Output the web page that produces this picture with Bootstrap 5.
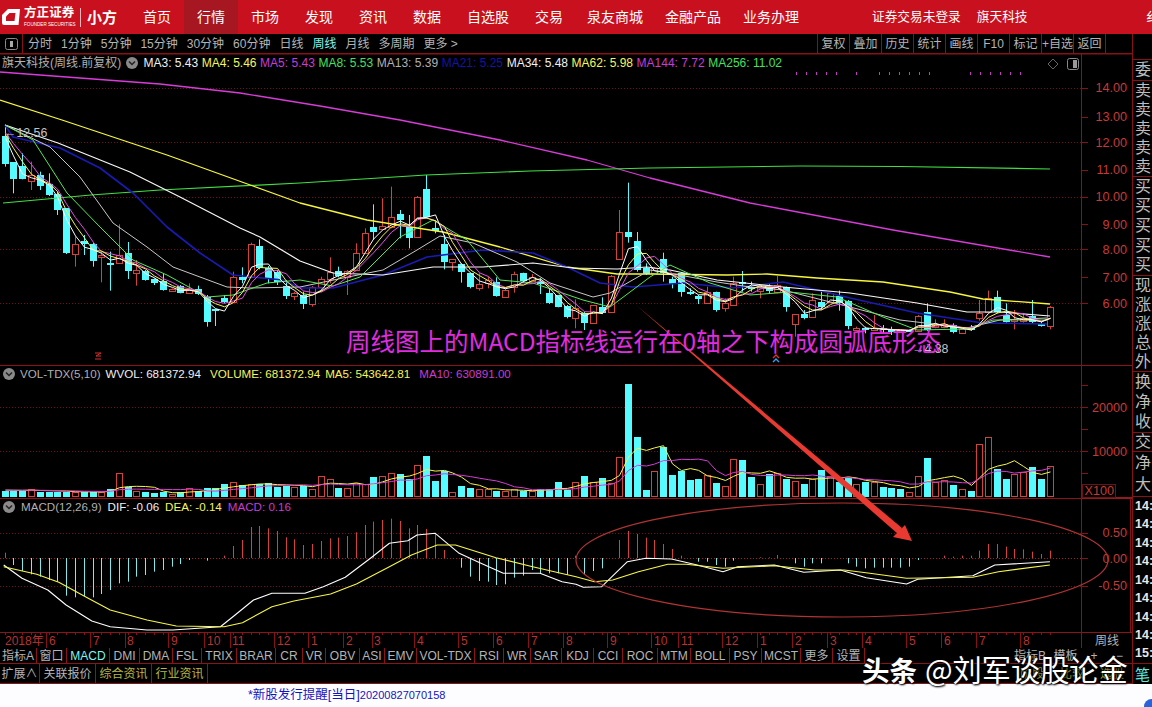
<!DOCTYPE html>
<html lang="zh">
<head>
<meta charset="utf-8">
<title>旗天科技 周线</title>
<link href="https://cdn.jsdelivr.net/npm/bootstrap@5.3.0/dist/css/bootstrap.min.css" rel="stylesheet">
<style>
html,body{margin:0;height:100%;overflow:hidden;background:#000}
body{font-family:"Liberation Sans","Noto Sans CJK SC",sans-serif;font-size:12px;color:#b4b4b4;line-height:1}
.app{width:1152px;height:707px}
.topbar{height:34px;background:#c8101e;color:#fff;padding:0}
.logo{width:130px;padding-left:2px}
.logo-txt{width:53px}
.logo-cn{font-size:12.5px;font-weight:700;line-height:13px;letter-spacing:.1px}
.logo-en{font-size:4.6px;line-height:6px;margin-top:2px;white-space:nowrap}
.logo-bar{width:1px;height:19px;background:#f4b8bc;margin:0 6px 0 3px}
.logo-min{font-size:15px;font-weight:700}
.navbar-expand .navbar-nav .nav-link.topl{color:#fff;font-size:14px;line-height:34px;padding:0 13px;height:34px}
.navbar-expand .navbar-nav .nav-link.topl.wide4{padding:0 11px}
.navbar-expand .navbar-nav .nav-link.topl.on{background:#a61722}
.top-right{font-size:12.7px;margin-left:62px;gap:16px}
.top-clip{position:absolute;left:1146px;top:10px;font-size:13px}
.leftcol{width:1132px}
.toolbar{height:20px;border-bottom:1px solid #861217}
.tb-ico{width:23px;height:19px;border-right:1px solid #861217}
.tb-list{gap:9px;padding-left:5px}
.tb-cy{color:#7ff5ee}
.tb-btn{width:32px;height:19px;border-left:1px solid #861217;color:#b4b4b4}
.tb-right{margin-right:26px;border-right:1px solid #861217}
.chartwrap{height:594px}
.canvas-svg{left:0;top:0}
.pane1{height:311px}.pane2{height:133px}.pane3{height:134px}
.pane-head{height:18px;gap:5px;padding-left:3px;font-size:11.6px;white-space:nowrap}
.pane3 .pane-head{gap:6px}
.pane1 .pane-head{font-size:12px;padding-left:2px;gap:3.6px}
.head-mark{margin:0 1.5px}
.c-w{color:#f0f0f0}.c-g{color:#b0b0b0}.c-y{color:#f6f65a}.c-m{color:#c93bd6}.c-l{color:#46e05c}.c-b{color:#1414a8}
.tabs1{height:16px;border-bottom:1px solid #8c1318}
.tabs2{height:20px;border-bottom:1px solid #8c1318}
.tab-grid1{display:grid;grid-template-columns:37px 30px 43px 30px 33px 29px 35px 39px 27px 23px 34px 25px 32px 58px 29px 27px 31px 32px 29px 35px 33px 39px 32px 39px 32px 32px}
.tab-grid2{display:grid;grid-template-columns:40px 56px 56px 56px}
.tabc{border-right:1px solid #8c1318;white-space:nowrap;height:100%}
.tab-yel{color:#b9b645}
.tr-a{width:40px}.tr-b{width:31px}.tr-c{width:26px}
.tr-d{width:25px}
.tabs2 .faint{color:#8e9030;gap:16px;margin-right:8px}
.sidecol{width:20px;border-left:1px solid #861217;display:grid;grid-template-rows:26px 21px 96px 99px 96px 61px 19px 45px 167px 20px;background:#000}
.sgrp{border-bottom:1px solid #861217;overflow:hidden;font-size:16px;padding-left:2px;color:#bdbdbd;white-space:nowrap}
.sgrp-t{font-size:12.5px;font-weight:700;color:#e8e8e8}
.sgrp-c{color:#5fe9e4;font-size:15px;border-bottom:0}
.whitebar{height:23px;background:#fdfdff;color:#1414c0;padding-left:248px;font-size:12.5px}
.whitebar small{font-size:11px}
.dot-blue{position:absolute;right:-7px;bottom:-7px;width:15px;height:15px;border-radius:50%;background:#2a62d8}
.wm{left:862px;top:651px;color:#fff;font-size:29.2px;line-height:34px;white-space:nowrap;text-shadow:0 0 2px #000,1px 1px 2px #000;font-family:"Noto Sans CJK SC",sans-serif}
.wm b{font-weight:700;margin-right:8px;font-size:27.5px}
svg text{font-family:"Liberation Sans","Noto Sans CJK SC",sans-serif}
.ax{fill:#c63a36;font-size:12.6px;text-anchor:end}
.dt{fill:#b83232;font-size:12px}
.big{fill:#e02ce0;font-size:24.5px;font-family:"Noto Sans CJK SC",sans-serif}
.mini{fill:#c4c4c4;font-size:12.4px}
.big2{fill:#b4b4b4;font-size:12px}
</style>
</head>
<body>
<div class="app position-relative d-flex flex-column overflow-hidden">

<nav class="topbar navbar navbar-expand flex-nowrap justify-content-start">
  <div class="logo d-flex align-items-center">
    <svg width="18" height="16" viewBox="0 0 18 16"><path fill="#fff" d="M6 0H18L16.5 16H2Q0 16 0 14V6Z"/><path fill="#c8101e" d="M7.5 4H13.5L12.5 12H4V7.5Z"/></svg>
    <div class="logo-txt ms-1"><div class="logo-cn">方正证券</div><div class="logo-en">FOUNDER SECURITIES</div></div>
    <span class="logo-bar"></span><span class="logo-min">小方</span>
  </div>
  <ul class="navbar-nav">
    <li class="nav-item"><a class="nav-link topl" href="#">首页</a></li>
    <li class="nav-item"><a class="nav-link topl on" href="#">行情</a></li>
    <li class="nav-item"><a class="nav-link topl" href="#">市场</a></li>
    <li class="nav-item"><a class="nav-link topl" href="#">发现</a></li>
    <li class="nav-item"><a class="nav-link topl" href="#">资讯</a></li>
    <li class="nav-item"><a class="nav-link topl" href="#">数据</a></li>
    <li class="nav-item"><a class="nav-link topl" href="#">自选股</a></li>
    <li class="nav-item"><a class="nav-link topl" href="#">交易</a></li>
    <li class="nav-item"><a class="nav-link topl wide4" href="#">泉友商城</a></li>
    <li class="nav-item"><a class="nav-link topl wide4" href="#">金融产品</a></li>
    <li class="nav-item"><a class="nav-link topl wide4" href="#">业务办理</a></li>
  </ul>
  <div class="top-right d-flex"><span>证券交易未登录</span><span>旗天科技</span></div>
  <span class="top-clip">纟</span>
</nav>

<div class="d-flex">
  <div class="leftcol d-flex flex-column">
    <div class="toolbar d-flex align-items-center">
      <div class="tb-ico d-flex align-items-center justify-content-center">
        <svg width="13" height="12" viewBox="0 0 13 12"><rect x=".5" y=".5" width="12" height="11" rx="2" fill="none" stroke="#8a8a8a"/><rect x="5" y="3" width="3" height="6" fill="#aaa"/></svg>
      </div>
      <div class="tb-list d-flex align-items-center">
        <span>分时</span><span>1分钟</span><span>5分钟</span><span>15分钟</span><span>30分钟</span><span>60分钟</span><span>日线</span><span class="tb-cy">周线</span><span>月线</span><span>多周期</span><span>更多 &gt;</span>
      </div>
      <div class="tb-right ms-auto d-flex">
        <span class="tb-btn d-flex align-items-center justify-content-center">复权</span>
        <span class="tb-btn d-flex align-items-center justify-content-center">叠加</span>
        <span class="tb-btn d-flex align-items-center justify-content-center">历史</span>
        <span class="tb-btn d-flex align-items-center justify-content-center">统计</span>
        <span class="tb-btn d-flex align-items-center justify-content-center">画线</span>
        <span class="tb-btn d-flex align-items-center justify-content-center">F10</span>
        <span class="tb-btn d-flex align-items-center justify-content-center">标记</span>
        <span class="tb-btn d-flex align-items-center justify-content-center">+自选</span>
        <span class="tb-btn d-flex align-items-center justify-content-center">返回</span>
      </div>
    </div>

    <div class="chartwrap position-relative">
      <svg class="canvas-svg position-absolute" width="1132" height="594" viewBox="0 54 1132 594">
        <g id="draw"></g>
        <text class="ax" x="1127" y="92">14.00</text><text class="ax" x="1127" y="121">13.00</text><text class="ax" x="1127" y="147">12.00</text><text class="ax" x="1127" y="174">11.00</text><text class="ax" x="1127" y="201">10.00</text><text class="ax" x="1127" y="229">9.00</text><text class="ax" x="1127" y="254">8.00</text><text class="ax" x="1127" y="282">7.00</text><text class="ax" x="1127" y="308">6.00</text>
        <text class="ax" x="1127" y="412">20000</text><text class="ax" x="1127" y="456">10000</text>
        <text class="ax" x="1114" y="495">X100</text>
        <text class="ax" x="1127" y="537">0.50</text><text class="ax" x="1127" y="563">0.00</text><text class="ax" x="1127" y="590">-0.50</text>
        <text class="dt" x="5" y="645">2018年</text><text class="dt" x="49" y="645">6</text><text class="dt" x="93" y="645">7</text><text class="dt" x="127" y="645">8</text><text class="dt" x="171" y="645">9</text><text class="dt" x="207" y="645">10</text><text class="dt" x="232" y="645">11</text><text class="dt" x="277" y="645">12</text><text class="dt" x="311" y="645">1</text><text class="dt" x="346" y="645">2</text><text class="dt" x="374" y="645">3</text><text class="dt" x="417" y="645">4</text><text class="dt" x="461" y="645">5</text><text class="dt" x="496" y="645">6</text><text class="dt" x="531" y="645">7</text><text class="dt" x="566" y="645">8</text><text class="dt" x="610" y="645">9</text><text class="dt" x="654" y="645">10</text><text class="dt" x="681" y="645">11</text><text class="dt" x="725" y="645">12</text><text class="dt" x="760" y="645">1</text><text class="dt" x="795" y="645">2</text><text class="dt" x="830" y="645">3</text><text class="dt" x="865" y="645">4</text><text class="dt" x="909" y="645">5</text><text class="dt" x="944" y="645">6</text><text class="dt" x="979" y="645">7</text><text class="dt" x="1023" y="645">8</text>
        <text class="big2" x="1095" y="645">周线</text>
        <text class="mini" x="4" y="137">←12.56</text>
        <text class="mini" x="912" y="353">→4.38</text>
        <g id="over"></g>
        <text class="big" x="346" y="351">周线图上的MACD指标线运行在0轴之下构成圆弧底形态</text>
      </svg>

      <div class="pane1 position-relative">
        <div class="pane-head d-flex align-items-center">
          <span class="c-g">旗天科技(周线.前复权)</span>
          <svg class="head-mark" width="12" height="12" viewBox="0 0 12 12"><circle cx="6" cy="6" r="6" fill="#8a8a8a"/><path d="M3 4.5L6 7.5L9 4.5" fill="none" stroke="#222" stroke-width="1.5"/></svg>
          <span class="c-w">MA3: 5.43</span><span class="c-y">MA4: 5.46</span><span class="c-m">MA5: 5.43</span><span class="c-l">MA8: 5.53</span><span class="c-g">MA13: 5.39</span><span class="c-b">MA21: 5.25</span><span class="c-w">MA34: 5.48</span><span class="c-y">MA62: 5.98</span><span class="c-m">MA144: 7.72</span><span class="c-l">MA256: 11.02</span>
        </div>
        <svg class="position-absolute" style="left:1047px;top:4px" width="33" height="13" viewBox="0 0 33 13"><path d="M6 1L11 6L6 11L1 6Z" fill="none" stroke="#666"/><rect x="20.5" y=".5" width="11" height="11" rx="2" fill="none" stroke="#8a8a8a"/><rect x="26" y="2" width="4" height="8" fill="#999"/></svg>
      </div>
      <div class="pane2">
        <div class="pane-head d-flex align-items-center">
          <svg width="12" height="12" viewBox="0 0 12 12"><circle cx="6" cy="6" r="6" fill="#8a8a8a"/><path d="M3 4.5L6 7.5L9 4.5" fill="none" stroke="#222" stroke-width="1.5"/></svg>
          <span class="c-g">VOL-TDX(5,10)</span><span class="c-w">WVOL: 681372.94</span><span class="c-y ms-1">VOLUME: 681372.94</span><span class="c-y">MA5: 543642.81</span><span class="c-m ms-1">MA10: 630891.00</span>
        </div>
      </div>
      <div class="pane3">
        <div class="pane-head d-flex align-items-center">
          <svg width="12" height="12" viewBox="0 0 12 12"><circle cx="6" cy="6" r="6" fill="#8a8a8a"/><path d="M3 4.5L6 7.5L9 4.5" fill="none" stroke="#222" stroke-width="1.5"/></svg>
          <span class="c-g">MACD(12,26,9)</span><span class="c-w">DIF: -0.06</span><span class="c-y">DEA: -0.14</span><span class="c-m">MACD: 0.16</span>
        </div>
      </div>
    </div>

    <div class="tabs1 d-flex">
      <div class="tab-grid1">
        <span class="tabc d-flex align-items-center justify-content-center">指标A</span><span class="tabc d-flex align-items-center justify-content-center">窗口</span><span class="tabc d-flex align-items-center justify-content-center tb-cy">MACD</span><span class="tabc d-flex align-items-center justify-content-center">DMI</span><span class="tabc d-flex align-items-center justify-content-center">DMA</span><span class="tabc d-flex align-items-center justify-content-center">FSL</span><span class="tabc d-flex align-items-center justify-content-center">TRIX</span><span class="tabc d-flex align-items-center justify-content-center">BRAR</span><span class="tabc d-flex align-items-center justify-content-center">CR</span><span class="tabc d-flex align-items-center justify-content-center">VR</span><span class="tabc d-flex align-items-center justify-content-center">OBV</span><span class="tabc d-flex align-items-center justify-content-center">ASI</span><span class="tabc d-flex align-items-center justify-content-center">EMV</span><span class="tabc d-flex align-items-center justify-content-center">VOL-TDX</span><span class="tabc d-flex align-items-center justify-content-center">RSI</span><span class="tabc d-flex align-items-center justify-content-center">WR</span><span class="tabc d-flex align-items-center justify-content-center">SAR</span><span class="tabc d-flex align-items-center justify-content-center">KDJ</span><span class="tabc d-flex align-items-center justify-content-center">CCI</span><span class="tabc d-flex align-items-center justify-content-center">ROC</span><span class="tabc d-flex align-items-center justify-content-center">MTM</span><span class="tabc d-flex align-items-center justify-content-center">BOLL</span><span class="tabc d-flex align-items-center justify-content-center">PSY</span><span class="tabc d-flex align-items-center justify-content-center">MCST</span><span class="tabc d-flex align-items-center justify-content-center">更多</span><span class="tabc d-flex align-items-center justify-content-center">设置</span>
      </div>
      <div class="ms-auto d-flex align-items-center text-center">
        <span class="tr-a">指标B</span><span class="tr-b">模板</span><span class="tr-c">+</span><span class="tr-d">−</span>
      </div>
    </div>
    <div class="tabs2 d-flex">
      <div class="tab-grid2">
        <span class="tabc d-flex align-items-center justify-content-center">扩展∧</span><span class="tabc d-flex align-items-center justify-content-center">关联报价</span><span class="tabc tab-yel d-flex align-items-center justify-content-center">综合资讯</span><span class="tabc tab-yel d-flex align-items-center justify-content-center">行业资讯</span>
      </div>
      <div class="faint ms-auto d-flex align-items-center"><span>阶段</span><span>比较</span><span>选股</span></div>
    </div>
  </div>

  <aside class="sidecol">
    <div class="sgrp"></div>
    <div class="sgrp d-flex align-items-center">委</div>
    <div class="sgrp d-flex flex-column justify-content-around"><span>卖</span><span>卖</span><span>卖</span><span>卖</span><span>卖</span></div>
    <div class="sgrp d-flex flex-column justify-content-around"><span>买</span><span>买</span><span>买</span><span>买</span><span>买</span></div>
    <div class="sgrp d-flex flex-column justify-content-around"><span>现</span><span>涨</span><span>涨</span><span>总</span><span>外</span></div>
    <div class="sgrp d-flex flex-column justify-content-around"><span>换</span><span>净</span><span>收</span></div>
    <div class="sgrp d-flex align-items-center">交</div>
    <div class="sgrp d-flex flex-column justify-content-around"><span>净</span><span>大</span></div>
    <div class="sgrp sgrp-t d-flex flex-column justify-content-around"><span>14:</span><span>14:</span><span>14:</span><span>14:</span><span>14:</span><span>14:</span><span>14:</span><span>14:</span><span>15:</span></div>
    <div class="sgrp sgrp-c d-flex align-items-center">笔</div>
  </aside>
</div>

<div class="whitebar position-relative d-flex align-items-center flex-grow-1 overflow-hidden">
  <span>*新股发行提醒[当日]<small>20200827070158</small></span>
  <span class="dot-blue"></span>
</div>

<div class="wm position-absolute"><b>头条</b>@刘军谈股论金</div>
</div>

<script>
const CAN=[
['c',48,132,20,140],['c',126,176,126,220],['c',138,178,100,178],['r',166,182,125,210],['c',166,198,155,210],['c',192,224,160,228],['c',222,270,215,285],['c',265,400,265,402],['r',373,402,350,440],['c',362,372,345,405],
['c',372,422,368,440],['r',405,410,395,487],['c',428,434,395,512],['r',405,430,313,432],['c',400,452,366,477],['r',450,458,420,497],['c',453,480,450,482],['c',477,490,475,495],['c',482,510,462,512],['r',507,514,505,515],
['c',497,518,495,520],['r',507,520,490,522],['c',507,522,497,525],['c',530,605,525,620],['c',566,570,566,618],['c',535,545,525,550],['r',472,545,455,548],['c',472,480,442,490],['r',373,470,368,470],['c',378,445,358,448],
['c',445,478,438,490],['c',455,485,450,495],['c',497,528,480,537],['r',520,527,515,540],
['c',405,432,395,447],['r',382,432,378,440],['r',358,380,350,395],['r',335,358,292,370],['c',332,348,320,352],['r',332,350,330,405],['r',280,330,250,332],['r',218,280,205,282],['c',200,215,133,240],['r',198,208,115,210],['r',172,200,80,205],['c',162,180,150,235],['c',200,235,165,265],['r',110,230,108,232],['c',87,172,45,175],['c',205,212,180,220],
['c',252,305,225,328],['r',298,307,298,332],['c',312,335,310,368],['c',338,382,338,385],['r',372,383,340,392],['r',360,370,350,385],['c',365,408,352,410],['r',390,410,385,412],['r',342,380,335,398],['c',338,362,338,368],
['r',352,362,342,365],['c',365,370,355,402],['c',400,430,385,432],['c',405,440,405,442],['c',438,472,435,475],['r',445,475,418,505],['c',458,488,455,510],['r',435,488,435,490],['c',440,460,412,462],['r',348,455,345,455],
['r',217,296,150,296],['c',217,232,68,248],['c',243,330,216,335],['c',325,342,310,345],
['r',115,130,112,135],['c',87,130,68,155],['c',148,162,140,175],['c',130,185,128,200],['c',185,190,175,195],['c',197,208,195,222],['r',185,218,170,220],['c',187,240,185,245],['r',220,235,205,245],['r',158,224,140,226],
['c',157,162,123,185],['c',170,175,155,185],['r',170,182,165,205],['c',172,182,160,190],['r',165,185,138,190],['c',172,232,170,245],['r',253,282,253,320],['c',252,265,240,268],['r',210,260,190,262],['c',215,232,185,240],
['r',188,215,188,220],['c',198,218,182,242],['c',212,288,210,298],['r',295,300,290,300],['c',295,298,290,310],['r',295,300,255,303],['c',295,300,285,310],['c',300,303,290,315],['r',300,303,298,306],['c',300,303,298,306],
['r',257,302,255,303],['c',247,300,220,303],['r',283,290,268,295],['r',283,290,268,295],['c',285,305,280,310],['r',298,310,295,310],['c',295,298,285,302],['r',250,263,210,272],['r',203,245,182,248],['c',202,245,182,250],
['c',255,275,220,278],['r',268,272,240,298],['r',265,272,250,278],['c',258,275,210,280],['c',282,287,275,290],['r',232,287,228,298]];
const zy=(i,z)=>(i<34?120:i<74?160:230)+z/3;
const X=i=>Math.round(4.7+8.78*i)+.5;
const CY='#55fbff',RD='#d5423c';
let s='',o='';
const ln=(a,b,c,d,col,w,ex)=>`<line x1="${a}" y1="${b}" x2="${c}" y2="${d}" stroke="${col}" stroke-width="${w||1}" ${ex||''}/>`;
const poly=(pts,col,w)=>`<polyline fill="none" stroke="${col}" stroke-width="${w||1}" stroke-linejoin="round" points="${pts.map(p=>p.join(',')).join(' ')}"/>`;
const DOT='stroke-dasharray="1 2"';

[88,142,197,249,303,407,451,533,586].forEach(y=>s+=ln(0,y+.5,1081,y+.5,'#6e1115',1,DOT));
s+=ln(0,558.5,1081,558.5,'#a02020',1,DOT);
s+=ln(0,365.5,1132,365.5,'#8c1318');
s+=ln(0,498.5,1081,498.5,'#8c1318');
s+=ln(1081,498,1132,498,'#961a1c',2);
s+=ln(0,632.5,1132,632.5,'#8c1318');
s+=ln(1081.5,54,1081.5,648,'#861217');
s+=ln(1130.5,498,1130.5,632,'#861217');
s+=ln(0,54,1132,54,'#861217');
[88,117,142,170,197,224,249,277,303,385,407,429,451,473,533,558,586].forEach(y=>s+=ln(1082,y+.5,1088,y+.5,'#861217'));
s+=`<rect x="1082.5" y="484.5" width="33" height="13" fill="none" stroke="#6e1115"/>`;
for(let i=0;i<120;i++)s+=ln(X(i),633,X(i),635,'#861217');
[46,90,125,168,204,230,274,308,343,372,414,458,493,528,563,607,651,678,722,757,792,827,862,906,941,976,1020].forEach(x=>s+=ln(x+.5,633,x+.5,648,'#861217'));

CAN.forEach((c,i)=>{
  const x=X(i),col=c[0]=='c'?CY:RD;
  let t=zy(i,c[1]),b=zy(i,c[2]);if(b-t<2)b=t+2;
  t=Math.round(t);b=Math.round(b);
  s+=ln(x,zy(i,c[3]),x,zy(i,c[4]),col);
  if(c[0]=='c') s+=`<rect x="${x-3.5}" y="${t}" width="7" height="${b-t}" fill="${CY}"/>`;
  else s+=`<rect x="${x-3}" y="${t+.5}" width="6" height="${b-t}" fill="#000" stroke="${RD}"/>`;
});
const close=CAN.map((c,i)=>zy(i,c[0]=='c'?c[2]:c[1]));
const ma=(n,arr,seed)=>arr.map((_,i)=>{let t=0;for(let k=i-n+1;k<=i;k++)t+=k<0?seed:arr[k];return [X(i),+(t/n).toFixed(1)];});

s+=poly([[0,72],[80,78],[160,84],[240,93],[320,106],[400,120],[500,140],[587,160],[650,178],[750,203],[893,230],[1050,257]],'#d83cd8',1.3);
s+=poly([[3,203],[91,195],[160,190],[300,183],[426,175],[530,171],[650,168],[800,166],[900,166.5],[1050,169]],'#40e040',1.2);
s+=poly([[0,100],[62,120],[167,155],[253,186],[300,203],[367,220],[417,228],[443,232],[500,247],[567,267],[617,274],[650,274],[727,275],[767,274],[817,278],[883,282],[950,292],[983,299],[1050,304]],'#f6f63c',1.3);
s+=poly([[5,125],[13,137],[60,148],[100,168],[133,193],[167,227],[200,253],[233,275],[283,280],[300,288],[333,288],[383,275],[427,257],[483,250],[533,253],[567,267],[600,283],[633,287],[683,283],[733,288],[783,282],[817,290],[850,298],[917,313],[983,323],[1047,324]],'#1a1ab4',1.6);
s+=poly([[5,125],[58,143],[130,172],[180,197],[240,228],[260,237],[300,261],[333,273],[383,275],[433,267],[483,267],[533,263],[573,268],[617,269],[647,267],[670,270],[717,280],[783,287],[850,293],[917,303],[967,312],[1000,312],[1050,316]],'#f8f8f8',1.2);
s+=poly([[5,125],[50,147],[80,177],[113,223],[147,247],[173,267],[227,287],[250,288],[300,287],[343,278],[383,270],[417,250],[440,236],[473,243],[517,262],[550,283],[593,297],[610,293],[650,270],[663,272],[717,282],[750,287],[783,290],[850,307],[900,320],[967,328],[1000,320],[1047,318]],'#c8c8c8',1);
s+=poly([[5,125],[33,140],[67,193],[100,227],[133,260],[167,275],[207,297],[233,295],[267,283],[300,280],[333,286],[360,277],[400,237],[433,220],[467,240],[500,280],[533,283],[583,300],[610,307],[650,277],[670,265],[710,283],[750,295],[790,292],[837,297],[883,317],[917,330],[967,329],[993,320],[1047,320]],'#55e855',1);
s+=poly(ma(5,close,125),'#e84ce8',1);
s+=poly(ma(4,close,125),'#f6f64a',1);
s+=poly(ma(3,close,125),'#ffffff',1);

const V="c377 c377 c377 r372 c380 c380 c380 c380 r380 c382 c382 r380 c372 r325 c365 r378 c382 c385 c382 r388 c380 r370 c378 c370 c370 c357 r352 c360 r358 c358 c355 c365 c362 r365 c362 r372 r332 r342 c370 r370 r355 r358 c337 r333 r325 c328 c342 r300 c273 c348 c318 r380 c363 c370 r373 r373 c378 r378 r373 c378 r378 c373 c373 c352 c375 r350 c333 r352 c340 r355 r277 c57 c217 c375 r317 c245 c330 c317 c345 c342 r330 c353 r363 r283 c285 c335 r358 c327 r323 c342 r348 c357 r342 c315 r333 c350 c338 r358 c350 r352 c367 c370 c372 r382 r332 c280 r350 r345 c360 r373 c378 r237 r217 c312 c342 r328 r322 c307 c342 r304".split(' ');
const vt=V.map(v=>365+(+v.slice(1))/3);
V.forEach((v,i)=>{
  const x=X(i),t=Math.round(vt[i]);
  if(v[0]=='c') s+=`<rect x="${x-3.5}" y="${t}" width="7" height="${497-t}" fill="${CY}"/>`;
  else s+=`<rect x="${x-3}" y="${t+.5}" width="6" height="${497-t-1}" fill="#000" stroke="${RD}"/>`;
});
s+=poly(ma(5,vt,490),'#f6f64a',1);
s+=poly(ma(10,vt,490),'#d63cd6',1);

const H=[563,600,618,628,635,645,650,692,697,693,697,687,675,655,650,635,630,620,615,605,597,585,0,587,0,572,543,525,486,483,490,498,517,523,540,537,528,520,518,513,502,480,470,465,461,468,490,480,492,505,555,0,608,635,648,650,660,658,638,632,615,625,625,625,630,572,628,618,610,0,525,498,507,518,525,537,552,572,0,590,590,600,605,587,0,0,577,577,570,0,595,605,595,595,0,0,595,605,610,608,608,608,608,605,585,0,0,572,575,572,572,557,537,537,545,552,553,560,567,557];
H.forEach((z,i)=>{ if(z) s+=ln(X(i),558,X(i),365+z/3,z<580?RD:'#7fe8e8'); });
const m8=p=>p.map(a=>[+(a[0]/2.722).toFixed(1),+(365+a[1]/3).toFixed(1)]);
const m9=p=>p.map(a=>[+(576+a[0]/2.722).toFixed(1),+(365+a[1]/3).toFixed(1)]);
const dif=m8([[10,600],[60,640],[130,675],[180,720],[250,768],[300,785],[400,795],[470,795],[600,785],[640,750],[690,705],[740,685],[830,685],[880,665],[940,637],[1010,578],[1060,535],[1110,527],[1135,510],[1185,505],[1250,565],[1300,590],[1370,625],[1470,625],[1530,650],[1568,658]]).concat(m9([[20,667],[70,665],[140,590],[190,580],[260,582],[330,600],[400,620],[440,605],[540,600],[620,622],[720,615],[790,638],[900,657],[930,643],[1080,632],[1140,600],[1290,590]]));
const dea=m8([[10,605],[100,628],[160,652],[240,700],[300,735],[400,765],[480,783],[610,785],[660,773],[740,725],[800,708],[900,687],[970,657],[1060,605],[1120,570],[1190,540],[1240,540],[1350,578],[1450,605],[1568,635]]).concat(m9([[50,650],[100,645],[170,620],[250,598],[300,598],[400,610],[540,602],[650,615],[730,615],[800,625],[900,640],[1080,637],[1150,620],[1290,600]]));
s+=poly(dif,'#ffffff',1.1);
s+=poly(dea,'#f6f64a',1.1);
[796,806,816,826,836,856,879,889,899,909,919,929,970,980,990,1000,1010,1020].forEach(x=>s+=ln(x+.5,72,x+.5,75,'#c838c8'));
s+=`<path d="M95 353h6l-5 3h5M95 359h6" fill="none" stroke="#d8302c"/>`;
s+=`<path d="M773 358l3-3 3 3" fill="none" stroke="#e03030" stroke-width="1.4"/><path d="M773 362l3-3 3 3" fill="none" stroke="#3c9cf0" stroke-width="1.4"/>`;
document.getElementById('draw').innerHTML=s;

o+=`<ellipse cx="842" cy="560" rx="266" ry="57" fill="none" stroke="#b03434" stroke-width="1.2"/>`;
o+=`<polygon points="636,305 902,528 898,534" fill="#e83a30"/><polygon points="912,541 905,525 893,537" fill="#e83a30"/>`;
document.getElementById('over').innerHTML=o;
</script>
<script src="https://cdn.jsdelivr.net/npm/bootstrap@5.3.0/dist/js/bootstrap.bundle.min.js"></script>
</body>
</html>
